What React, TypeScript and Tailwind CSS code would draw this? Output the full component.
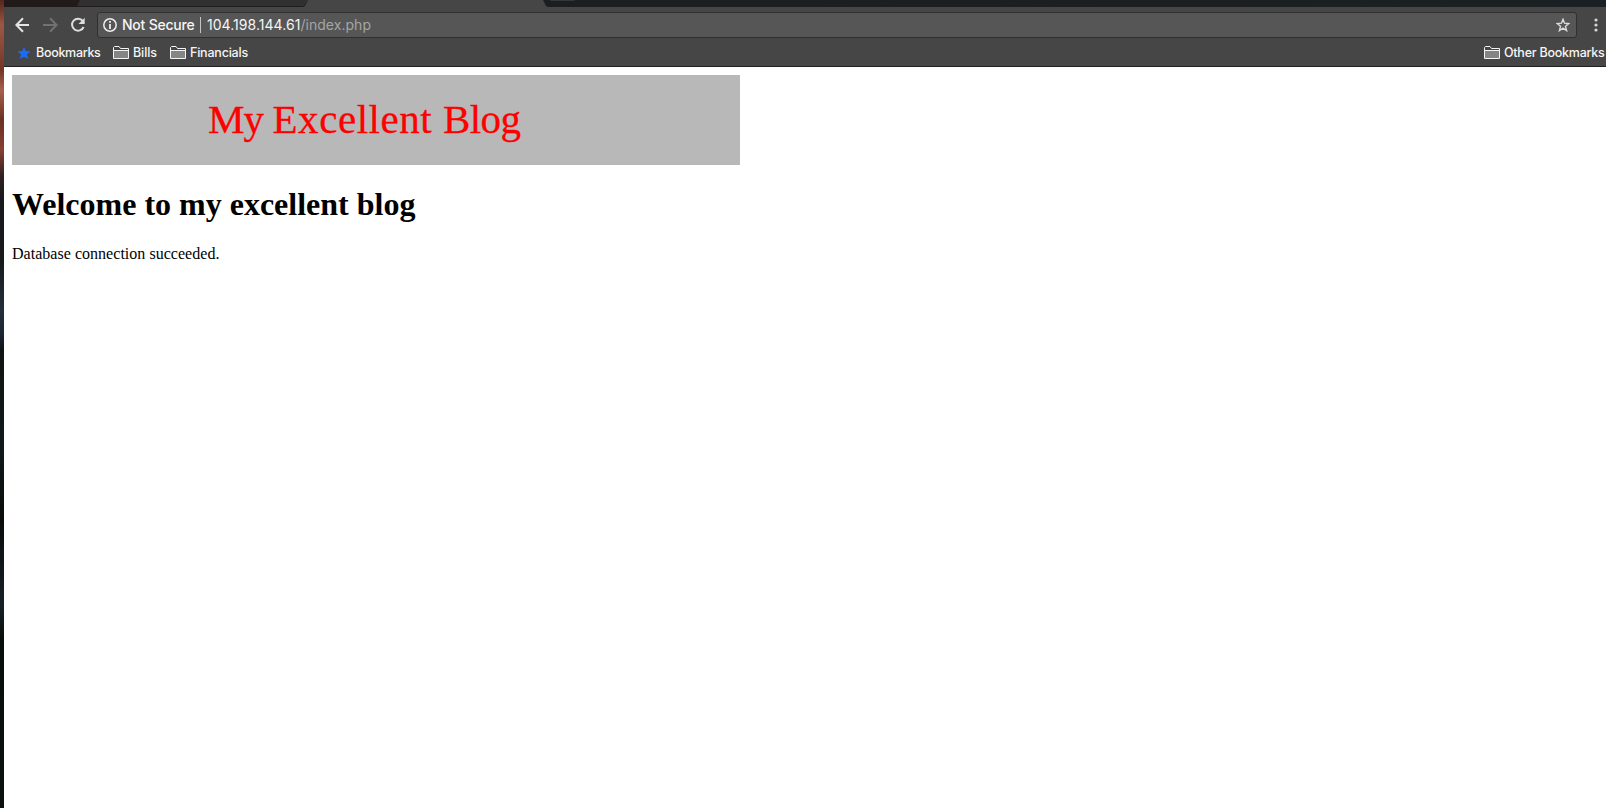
function Folder() {
  return (
    <svg className="h-[13px] w-4 shrink-0" viewBox="0 0 16 13" fill="none">
      <path d="M.5 12.5V1.5L1.5.5H6L7.5 2.5H15.5V12.5Z" stroke="#f4f4f4" />
      <path d="M1 5H15V12H1Z" fill="#858585" />
      <path d="M1 4.5H15" stroke="#f4f4f4" />
    </svg>
  );
}

function TabStrip() {
  return (
    <svg className="block h-[7px] w-full shrink-0" viewBox="0 0 1602 7" preserveAspectRatio="none">
      <defs>
        <linearGradient id="strip" x1="0" x2="1">
          <stop offset="0" stopColor="#211a1b" />
          <stop offset="0.3" stopColor="#1d1e20" />
          <stop offset="1" stopColor="#1a2023" />
        </linearGradient>
      </defs>
      <path d="M0 0H1602V7H0Z" fill="url(#strip)" />
      <path d="M76 0H304L300 6H73Z" fill="#303030" />
      <path d="M304 0H539L542 6L544 7H299L301 6Z" fill="#464646" />
      <path d="M546 0H571L570 1H547Z" fill="#353637" />
    </svg>
  );
}

function Toolbar() {
  return (
    <div className="flex h-[35px] shrink-0 items-center">
      <svg className="ml-[11px] h-4 w-[15px] shrink-0" viewBox="0 0 15 16" fill="none" stroke="#e4e4e4" strokeWidth="2">
        <path d="M14 8H1.5M8 1.3L1.4 8L8 14.7" />
      </svg>
      <svg className="ml-[13px] h-4 w-[15px] shrink-0" viewBox="0 0 15 16" fill="none" stroke="#717171" strokeWidth="2">
        <path d="M0 8H13M7 1.3L13.6 8L7 14.7" />
      </svg>
      <svg className="ml-3 h-4 w-4 shrink-0" viewBox="0 0 16 16" fill="none">
        <path d="M12.8 4A6 6 0 1 0 13.6 10" stroke="#dedede" strokeWidth="2" />
        <path d="M14.7 .8V7H8.5Z" fill="#dedede" />
      </svg>
      <div className="ml-[11px] flex h-[26px] w-[1480px] shrink-0 items-center rounded-[3px] border border-[#303030] bg-[#565656] text-[14px] leading-[18px] text-[#f5f5f5]">
        <svg className="ml-[5px] h-[14px] w-[14px] shrink-0" viewBox="0 0 14 14" fill="none">
          <circle cx="7" cy="7" r="6.2" stroke="#eee" strokeWidth="1.5" />
          <path d="M7 3V4.8M7 6V11" stroke="#eee" strokeWidth="1.8" />
        </svg>
        <span className="ml-[5px] w-[73px] shrink-0 whitespace-nowrap font-medium tracking-[-0.22px]">Not Secure</span>
        <span className="ml-[5px] h-4 w-px shrink-0 bg-[#c4c4c4]" />
        <span className="ml-[6px] whitespace-nowrap tracking-[0.04px]">
          104.198.144.61<span className="text-[#a5a5a5]">/index.php</span>
        </span>
        <svg className="ml-auto mr-[6px] h-[14px] w-[14px] shrink-0" viewBox="0 0 14 14" fill="none" stroke="#dcdcdc" strokeWidth="1.4">
          <path d="M7 1.3L8.5 5.2L12.8 5.5L9.5 8.3L10.6 12.6L7 10.2L3.4 12.6L4.5 8.3L1.2 5.5L5.5 5.2Z" />
        </svg>
      </div>
      <svg className="ml-[17px] h-4 w-1 shrink-0" viewBox="0 0 4 16" fill="#d6d6d6">
        <circle cx="2" cy="3" r="1.6" />
        <circle cx="2" cy="8" r="1.6" />
        <circle cx="2" cy="13" r="1.6" />
      </svg>
    </div>
  );
}

function BookmarksBar() {
  return (
    <div className="flex h-6 shrink-0 items-start pl-[13px] text-[12.5px] font-medium leading-[21px] tracking-[-0.3px] text-[#f5f5f5]">
      <svg className="mt-[5px] h-3 w-[14px] shrink-0" viewBox="0 0 13 12" fill="#1d6bf3">
        <path d="M6.5 0L8.4 4L13 4.4L9.5 7.4L10.7 12L6.5 9.7L2.3 12L3.5 7.4L0 4.4L4.6 4Z" />
      </svg>
      <span className="ml-[5px] w-[65px] shrink-0 whitespace-nowrap">Bookmarks</span>
      <span className="ml-3 mt-1"><Folder /></span>
      <span className="ml-1 w-[25px] shrink-0 whitespace-nowrap tracking-[-0.1px]">Bills</span>
      <span className="ml-3 mt-1"><Folder /></span>
      <span className="ml-1 w-[60px] shrink-0 whitespace-nowrap tracking-[-0.2px]">Financials</span>
      <span className="ml-auto mt-1"><Folder /></span>
      <span className="ml-1 w-[102px] shrink-0 whitespace-nowrap tracking-[-0.24px]">Other Bookmarks</span>
    </div>
  );
}

export default function App() {
  return (
    <div className="flex h-[808px] w-[1606px] overflow-hidden bg-white">
      <div className="w-1 shrink-0 bg-[linear-gradient(to_bottom,#55251d_0px,#9d5844_25px,#743629_70px,#a7604a_90px,#6b3024_120px,#873f32_150px,#302020_176px,#18191d_200px,#17191d_260px,#232e3b_310px,#1b2633_335px,#101313_350px,#10191b_450px,#090b0b_520px,#172126_605px,#070d09_640px,#0b110e_808px)]" />
      <div className="flex min-w-0 flex-1 flex-col">
        <header className="flex h-[67px] shrink-0 flex-col border-b border-[#231f20] bg-[#464646] font-['Inter',sans-serif]">
          <TabStrip />
          <Toolbar />
          <BookmarksBar />
        </header>
        <main className="flex flex-col items-start px-2 pt-2 font-['Liberation_Serif',serif] text-black">
          <div className="flex h-[90px] w-[728px] bg-[#b8b8b8] pl-[196px] pt-5 text-[41px] leading-[48px] text-[#ff0000]">
            <span className="whitespace-nowrap [-webkit-text-stroke:0.3px_#ff0000]">
              <span className="tracking-[-0.9px]">My </span>
              <span className="tracking-[0.55px]">Excellent </span>
              <span className="tracking-[-0.6px]">Blog</span>
            </span>
          </div>
          <h1 className="mt-[21px] whitespace-nowrap text-[32px] font-bold leading-[37px]">Welcome to my excellent blog</h1>
          <p className="mt-[22px] whitespace-nowrap text-[16px] leading-[18px] tracking-[0.03px]">Database connection succeeded.</p>
        </main>
      </div>
    </div>
  );
}
